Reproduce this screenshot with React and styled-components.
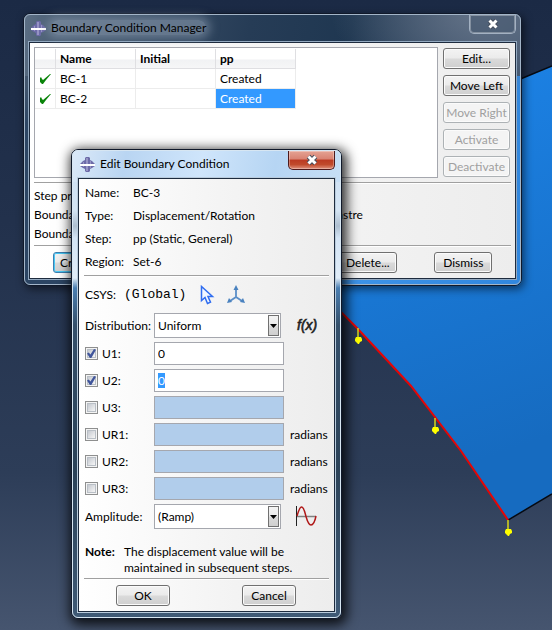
import React, { useEffect, useRef } from "react";
import styled, { createGlobalStyle, css } from "styled-components";

const GlobalStyle = createGlobalStyle`
  *, *::before, *::after { box-sizing: border-box; }
  body { margin: 0; }
  body, button, input, select {
    font-family: Lato, "Open Sans", sans-serif;
    font-size: 12px;
    line-height: 16px;
    color: #000;
  }
`;

const Desktop = styled.main`
  position: relative;
  min-height: 100vh;
  overflow: hidden;
  background: linear-gradient(#1b2a45 0%, #22314c 35%, #2d3d58 75%, #46556f 100%);
`;

const Scene = styled.svg`
  position: absolute;
  inset: 0;
  width: 100%;
  height: 100%;
`;

const glass = {
  inactive: css`
    background:
      radial-gradient(ellipse 150px 80px at 92% 0, rgba(108, 122, 142, 0.8), transparent) no-repeat,
      linear-gradient(100deg, #5c6f84 0, #465a70 8%, #263c56 45%, #1f3751 65%, #3f536c 90%) 0 0 / 100% 62px no-repeat,
      linear-gradient(#43566d 0, #43566d 70px, transparent 110px) 0 0 / 50% 100% no-repeat,
      linear-gradient(90deg, #2c4563 0, #2c4563 50%, #3d93e8 64%, #3187de 100%);
    box-shadow: 2px 3px 8px rgba(0, 0, 0, 0.55);
  `,
  active: css`
    background:
      linear-gradient(100deg, #dbe9f8 0, #b9d5f2 20%, #cfe5fb 48%, #b6d5f3 75%, #c6def5 100%) 0 0 / 100% 32px no-repeat,
      linear-gradient(#c9def3 0, #d5e5f4 60px, #aebfd0 76px, #d3e4f5 88px, #e1edf8 128px, #4b7fb2 138px, #35506b 175px, #2b4258 320px, #3f5a76 100%);
    box-shadow: 2px 3px 12px 3px rgba(0, 0, 0, 0.8);
  `,
};

const WindowFrame = styled.section`
  position: absolute;
  left: ${(p) => p.$left}px;
  top: ${(p) => p.$top}px;
  width: ${(p) => p.$width}px;
  padding: 1px ${(p) => (p.$look === "active" ? 6 : 5)}px 6px;
  border: 1px solid #10192a;
  border-radius: 7px;
  ${(p) => glass[p.$look]}
  &::before {
    content: "";
    position: absolute;
    inset: 0;
    border: 1px solid ${(p) => (p.$look === "active" ? "#d7e6f2" : "#a3b5c8")};
    border-radius: 6px;
    pointer-events: none;
  }
`;

const TitleBar = styled.header`
  display: flex;
  align-items: center;
  gap: 5px;
  height: 26px;
  margin-bottom: 1px;
  padding-left: 2px;
`;

const Title = styled.h1`
  flex: 1;
  margin: 0;
  font-size: 12px;
  font-weight: 400;
  white-space: nowrap;
  span {
    border-radius: 8px;
    ${(p) =>
      p.$glow &&
      css`
        background: rgba(150, 165, 185, 0.5);
        box-shadow: 0 0 10px 4px rgba(150, 165, 185, 0.5);
      `}
  }
`;

const CloseButton = styled.button`
  align-self: flex-start;
  display: grid;
  place-items: center;
  width: 47px;
  height: 19px;
  padding: 0;
  border: 1px solid ${(p) => (p.$look === "active" ? "#4d1a1c" : "#a3b1c2")};
  border-top: 0;
  border-radius: 0 0 5px 5px;
  background: ${(p) =>
    p.$look === "active"
      ? "linear-gradient(#e5a394 0, #d98272 45%, #bb3a22 50%, #c04a2c 75%, #e0907c 100%)"
      : "rgba(70, 88, 112, 0.6)"};
  box-shadow: inset 0 0 0 1px rgba(255, 255, 255, 0.3);
`;

const Client = styled.div`
  display: flex;
  flex-direction: column;
  border: 1px solid #1d2b3e;
  outline: 1px solid ${(p) => (p.$look === "active" ? "#b9cbdc" : "#93a9c0")};
  background: linear-gradient(90deg, #fff 0, #f4f4f4 55%, #ededed 100%);
  padding: ${(p) => p.$pad};
`;

const Rule = styled.hr`
  width: 100%;
  height: 2px;
  margin: 0;
  border: 0;
  border-top: 1px solid #a0a0a0;
  background: #fff;
`;

const PushButton = styled.button`
  height: 21px;
  min-width: ${(p) => p.$width || 54}px;
  padding: 0;
  border: 1px solid #707070;
  border-radius: 3px;
  background: linear-gradient(#f3f3f3 0, #ebebeb 48%, #dadada 52%, #cfcfcf 100%);
  box-shadow: inset 0 0 0 1px #fbfbfb;
  line-height: 18px;
  white-space: nowrap;
  ${(p) => p.$default && css`border-color: #3c7fb1; box-shadow: inset 0 0 0 1px #48c8f4;`}
  &:disabled {
    border-color: #adb2b5;
    background: #f4f4f4;
    color: #a0a0a0;
  }
`;

/* Manager window */
const ManagerTop = styled.div`
  display: flex;
  gap: 5px;
  padding-right: 1px;
  margin-bottom: 4px;
`;

const ListPane = styled.div`
  flex: 1;
  padding-top: 1px;
  border: 1px solid #a5a7ae;
  background: #fff;
`;

const ButtonColumn = styled.div`
  display: flex;
  flex-direction: column;
  gap: 6px;
  padding: 1px 0;
`;

const Table = styled.table`
  width: 261px;
  table-layout: fixed;
  border-collapse: separate;
  border-spacing: 0;
  th, td {
    height: 20px;
    padding: 0 0 0 4px;
    border-right: 1px solid #ececec;
    border-bottom: 1px solid #ececec;
    text-align: left;
    white-space: nowrap;
    line-height: 16px;
  }
  th {
    background: linear-gradient(#fff 50%, #f1f2f4 60%, #f6f6f7 100%);
    border-color: #dfdfe2;
    font-weight: 700;
  }
  th:first-child, td:first-child { width: 21px; }
  svg { display: block; }
`;

const Cell = styled.td`
  ${(p) => p.$selected && css`background: #3399ff; color: #fff;`}
`;

const Summary = styled.dl`
  display: grid;
  grid-template-columns: 147px 1fr;
  row-gap: 3px;
  margin: 0;
  padding: 4px 0 3px;
  white-space: nowrap;
  dt, dd { margin: 0; }
`;

const ManagerActions = styled.div`
  display: grid;
  grid-template-columns: repeat(5, 1fr);
  justify-items: center;
  padding-top: 5px;
`;

/* Edit window */
const Facts = styled.dl`
  display: grid;
  grid-template-columns: 48px 1fr;
  margin: 0 0 2px;
  padding-left: 1px;
  line-height: 23px;
  dt, dd { margin: 0; }
`;

const Form = styled.form`
  display: flex;
  flex-direction: column;
  gap: 4px;
  padding: 5px 0 15px 1px;
`;

const CsysRow = styled.div`
  display: grid;
  grid-template-columns: 39px 76px 27px 18px;
  align-items: center;
  height: 25px;
  margin-bottom: 2px;
`;

const CsysName = styled.output`
  font-family: "Liberation Mono", monospace;
  font-size: 13px;
`;

const IconButton = styled.button`
  display: block;
  padding: 0;
  border: 0;
  background: none;
  svg { display: block; }
`;

const FieldRow = styled.div`
  display: grid;
  grid-template-columns: 69px 130px 1fr;
  align-items: center;
`;

const Trailing = styled.span`
  padding-left: ${(p) => (p.$icon ? 12 : 6)}px;
`;

const CheckLabel = styled.label`
  display: flex;
  align-items: center;
  gap: 4px;
`;

const Check = styled.input`
  appearance: none;
  display: grid;
  place-items: center;
  width: 13px;
  height: 13px;
  margin: 0;
  border: 1px solid #8e8f8f;
  background: linear-gradient(135deg, #c5c9d0, #f6f6f6) 50% / 7px 7px no-repeat, #f4f4f4;
  box-shadow: inset 0 0 0 1px #f4f4f4, inset 0 0 0 2px #b9bfc6;
  &:checked::before {
    content: "";
    width: 9px;
    height: 9px;
    background: #40559b;
    clip-path: polygon(0 50%, 20% 38%, 38% 62%, 78% 0, 100% 8%, 48% 100%, 32% 100%);
  }
`;

const TextBox = styled.input`
  width: 100%;
  height: 23px;
  padding: 0 3px;
  border: 1px solid #a5a7ae;
  border-radius: 0;
  background: #fff;
  outline: none;
  &::selection { background: #3399ff; color: #fff; }
  &:disabled { background: #b1cdeb; }
`;

const Combo = styled.span`
  position: relative;
  display: block;
  width: 127px;
  select {
    appearance: none;
    display: block;
    width: 100%;
    height: 25px;
    padding: 0 16px 0 3px;
    border: 1px solid #a5a7ae;
    border-radius: 0;
    background: #fff;
  }
`;

const ComboArrow = styled.span`
  position: absolute;
  right: 2px;
  top: 2px;
  bottom: 2px;
  display: grid;
  place-items: center;
  width: 11px;
  border: 1px solid #707070;
  background: linear-gradient(#f3f3f3 0, #ebebeb 48%, #dadada 52%, #cfcfcf 100%);
  pointer-events: none;
`;

const Note = styled.p`
  display: grid;
  grid-template-columns: 39px 1fr;
  margin: 0 0 2px;
  padding-left: 1px;
  white-space: nowrap;
`;

const DialogActions = styled.div`
  display: flex;
  justify-content: space-between;
  padding: 5px 33px 0 32px;
`;

function AppIcon() {
  return (
    <svg width="15" height="15" viewBox="0 0 15 15" aria-hidden="true">
      <path d="M5 1l1-1h3l1 1v2l2 1 3 3v2l-3 2-2 1v2l-1 1H6l-1-1v-2l-2-1-3-2V7l3-3 2-1z" fill="#6d6ba8" />
      <path d="M6 1h2v13H6zM3 5h1v5H3zM10 4h1v7h-1z" fill="#9694c4" />
      <path d="M0 7h15v2H0z" fill="#fff" />
    </svg>
  );
}

function CloseGlyph() {
  return (
    <svg width="14" height="12" viewBox="0 0 14 12" aria-hidden="true">
      <path d="M3.500 2.500l7 7M10.500 2.500l-7 7" stroke="#47505f" strokeWidth="5" />
      <path d="M3.500 2.500l7 7M10.500 2.500l-7 7" stroke="#fff" strokeWidth="3" />
    </svg>
  );
}

function GreenTick() {
  return (
    <svg width="13" height="12" viewBox="0 0 13 12" role="img" aria-label="Active">
      <path d="M1 5l1-1 1 2 1 1L11 1h1L7 7l-3 4H3L1 9z" fill="#0a840a" />
    </svg>
  );
}

function PointerIcon() {
  return (
    <svg width="15" height="20" viewBox="0 0 15 20" aria-hidden="true">
      <path d="M1.500 1.500v14l3.500-3 2.500 6 3-1.300-2.500-5.700H12.500z" fill="#f2f7ff" stroke="#2f6df0" strokeWidth="1.500" />
    </svg>
  );
}

function TriadIcon() {
  return (
    <svg width="18" height="19" viewBox="0 0 18 19" aria-hidden="true">
      <path d="M9 3v9L3 16M9 12l6 4" fill="none" stroke="#5b8fc8" strokeWidth="1.800" />
      <path d="M9 0l2.500 5h-5zM0 18l2-5 3 4zM18 18l-2-5-3 4z" fill="#4a82bf" />
    </svg>
  );
}

function FunctionIcon() {
  return (
    <svg width="24" height="20" viewBox="0 0 24 20" role="img" aria-label="Create expression">
      <text
        x="1"
        y="14"
        fontFamily="Liberation Sans, sans-serif"
        fontSize="14"
        fontStyle="italic"
        fill="#222"
        stroke="#222"
        strokeWidth="0.600"
      >
        f(x)
      </text>
    </svg>
  );
}

function SineIcon() {
  return (
    <svg width="21" height="21" viewBox="0 0 21 21" aria-hidden="true">
      <path d="M1 10.500h19" stroke="#808080" strokeWidth="1.500" />
      <path d="M.5 0v20" stroke="#222" />
      <path d="M1 10C3 3 4 1 5.500 1 8 1 9 7 10 10.500S12.500 19 15 19s4-4 5-9" fill="none" stroke="#b01818" strokeWidth="1.500" />
    </svg>
  );
}

function Viewport() {
  const pins = [[358, 328], [435, 418], [508, 520]];
  return (
    <Scene viewBox="0 0 552 630" preserveAspectRatio="xMinYMin slice" aria-hidden="true">
      <defs>
        <linearGradient id="plate" x1="0" y1="0" x2="0.250" y2="1">
          <stop offset="0" stopColor="#1d86ec" />
          <stop offset="1" stopColor="#166bc0" />
        </linearGradient>
      </defs>
      <path d="M552 66L230 199 341 312 357 328 411 386 461 451 508 520 552 494z" fill="url(#plate)" />
      <path d="M552 66L230 199M508 520L552 494" fill="none" stroke="#060a12" strokeWidth="1.500" />
      <path d="M230 199L341 312 357 328 411 386 461 451 508 520" fill="none" stroke="#e60505" strokeWidth="2" />
      {pins.map(([x, y]) => (
        <g key={x} fill="#ffff00">
          <path d={`M${x} ${y}v10`} stroke="#d8d818" strokeWidth="1.500" />
          <path d={`M${x - 2} ${y + 9}h5l1 2v2l-2 1-1 2h-1l-2-2-1-1v-2z`} />
        </g>
      ))}
    </Scene>
  );
}

function AppWindow({ title, look, left, top, width, pad, children }) {
  return (
    <WindowFrame $look={look} $left={left} $top={top} $width={width} aria-label={title}>
      <TitleBar>
        <AppIcon />
        <Title $glow={look === "inactive"}>
          <span>{title}</span>
        </Title>
        <CloseButton type="button" $look={look} aria-label="Close">
          <CloseGlyph />
        </CloseButton>
      </TitleBar>
      <Client $look={look} $pad={pad}>{children}</Client>
    </WindowFrame>
  );
}

function ComboBox({ id, value }) {
  return (
    <Combo>
      <select id={id} defaultValue={value}>
        <option>{value}</option>
      </select>
      <ComboArrow>
        <svg width="7" height="4" viewBox="0 0 7 4" aria-hidden="true">
          <path d="M0 0h7L3.500 4z" fill="#000" />
        </svg>
      </ComboArrow>
    </Combo>
  );
}

const sideButtons = [
  ["Edit...", false],
  ["Move Left", false],
  ["Move Right", true],
  ["Activate", true],
  ["Deactivate", true],
];

function ManagerWindow() {
  return (
    <AppWindow title="Boundary Condition Manager" look="inactive" left={23} top={13} width={499} pad="4px 4px 5px">
      <ManagerTop>
        <ListPane>
          <Table>
            <thead>
              <tr>
                <th aria-label="State" />
                <th>Name</th>
                <th>Initial</th>
                <th>pp</th>
              </tr>
            </thead>
            <tbody>
              {["BC-1", "BC-2"].map((name) => (
                <tr key={name}>
                  <td><GreenTick /></td>
                  <td>{name}</td>
                  <td />
                  <Cell $selected={name === "BC-2"}>Created</Cell>
                </tr>
              ))}
            </tbody>
          </Table>
        </ListPane>
        <ButtonColumn>
          {sideButtons.map(([label, disabled]) => (
            <PushButton key={label} type="button" disabled={disabled} $width={67}>{label}</PushButton>
          ))}
        </ButtonColumn>
      </ManagerTop>
      <Rule />
      <Summary>
        <dt>Step procedure:</dt>
        <dd>Static, General</dd>
        <dt>Boundary condition type:</dt>
        <dd>Symmetry/Antisymmetry/Encastre</dd>
        <dt>Boundary condition status:</dt>
        <dd>Created in this step</dd>
      </Summary>
      <Rule />
      <ManagerActions>
        {["Create...", "Copy...", "Rename...", "Delete...", "Dismiss"].map((label) => (
          <PushButton key={label} type="button" $width={58} $default={label === "Create..."}>{label}</PushButton>
        ))}
      </ManagerActions>
    </AppWindow>
  );
}

const freedoms = [
  { name: "U1", on: true },
  { name: "U2", on: true, active: true },
  { name: "U3" },
  { name: "UR1", unit: "radians" },
  { name: "UR2", unit: "radians" },
  { name: "UR3", unit: "radians" },
];

function EditWindow() {
  const activeBox = useRef(null);
  useEffect(() => {
    activeBox.current.focus();
    activeBox.current.select();
  }, []);

  return (
    <AppWindow title="Edit Boundary Condition" look="active" left={71} top={149} width={271} pad="2px 5px 5px">
      <Facts>
        <dt>Name:</dt>
        <dd>BC-3</dd>
        <dt>Type:</dt>
        <dd>Displacement/Rotation</dd>
        <dt>Step:</dt>
        <dd>pp (Static, General)</dd>
        <dt>Region:</dt>
        <dd>Set-6</dd>
      </Facts>
      <Rule />
      <Form>
        <CsysRow>
          <span>CSYS:</span>
          <CsysName>(Global)</CsysName>
          <IconButton type="button" aria-label="Pick coordinate system">
            <PointerIcon />
          </IconButton>
          <IconButton type="button" aria-label="Create coordinate system">
            <TriadIcon />
          </IconButton>
        </CsysRow>
        <FieldRow>
          <label htmlFor="distribution">Distribution:</label>
          <ComboBox id="distribution" value="Uniform" />
          <Trailing $icon>
            <IconButton type="button" aria-label="Create expression"><FunctionIcon /></IconButton>
          </Trailing>
        </FieldRow>
        {freedoms.map(({ name, on, active, unit }) => (
          <FieldRow key={name}>
            <CheckLabel>
              <Check type="checkbox" defaultChecked={on} />
              {name}:
            </CheckLabel>
            <TextBox
              type="text"
              aria-label={`${name} value`}
              defaultValue={on ? "0" : ""}
              disabled={!on}
              ref={active ? activeBox : null}
            />
            {unit && <Trailing>{unit}</Trailing>}
          </FieldRow>
        ))}
        <FieldRow>
          <label htmlFor="amplitude">Amplitude:</label>
          <ComboBox id="amplitude" value="(Ramp)" />
          <Trailing $icon>
            <IconButton type="button" aria-label="Create amplitude"><SineIcon /></IconButton>
          </Trailing>
        </FieldRow>
      </Form>
      <Note>
        <strong>Note:</strong>
        <span>
          The displacement value will be
          <br />
          maintained in subsequent steps.
        </span>
      </Note>
      <Rule />
      <DialogActions>
        <PushButton type="submit">OK</PushButton>
        <PushButton type="button">Cancel</PushButton>
      </DialogActions>
    </AppWindow>
  );
}

export default function App() {
  return (
    <>
      <GlobalStyle />
      <Desktop>
        <Viewport />
        <ManagerWindow />
        <EditWindow />
      </Desktop>
    </>
  );
}
